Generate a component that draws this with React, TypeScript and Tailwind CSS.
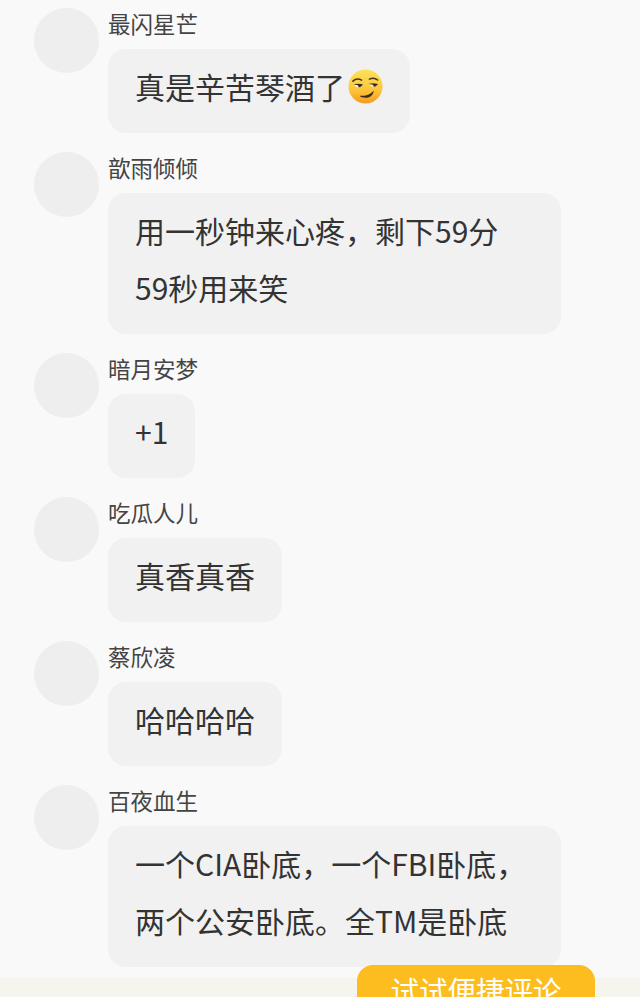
const comments = [
  { name: '最闪星芒', lines: ['真是辛苦琴酒了'], emoji: true },
  { name: '歆雨倾倾', lines: ['用一秒钟来心疼，剩下59分', '59秒用来笑'] },
  { name: '暗月安梦', lines: ['+1'] },
  { name: '吃瓜人儿', lines: ['真香真香'] },
  { name: '蔡欣凌', lines: ['哈哈哈哈'] },
  { name: '百夜血生', lines: ['一个CIA卧底，一个FBI卧底，', '两个公安卧底。全TM是卧底'] },
];

function SmirkEmoji() {
  return (
    <svg viewBox="0 0 36 36" className="ml-[2.500px] mt-[1px] h-[35px] w-[35px] shrink-0">
      <defs>
        <linearGradient id="face" x1="0" y1="0" x2="0" y2="1">
          <stop offset="0" stopColor="#fde25a" />
          <stop offset="0.6" stopColor="#fcc63a" />
          <stop offset="1" stopColor="#f59a1e" />
        </linearGradient>
      </defs>
      <circle cx="18" cy="18" r="17.5" fill="url(#face)" />
      <path d="M5 12.500c2.500-2.200 6-2.600 9-1" fill="none" stroke="#4a3320" strokeWidth="1.500" strokeLinecap="round" />
      <path d="M22 10.500c2.500-1.400 6-1.200 8.500.8" fill="none" stroke="#4a3320" strokeWidth="1.500" strokeLinecap="round" />
      <path d="M5.500 16c3-1 6.500-1 10 0-2 .3-2.500 2.800-5 2.800s-3.500-2-5-2.800z" fill="#fff6d8" />
      <path d="M21 15.500c3-1 6.500-1 10 0-1.500.8-2.500 2.800-5 2.800s-3-2.500-5-2.800z" fill="#fff6d8" />
      <path d="M5.500 16c3-1 6.500-1 10 0-1 .6-2 2.700-3.500 2.700s-1.800-2.100-1.800-2.100z" fill="#3b2a1c" />
      <path d="M21 15.500c3-1 6.500-1 10 0-1 .6-2 2.700-3.500 2.700s-1.800-2.100-1.800-2.100z" fill="#3b2a1c" />
      <path d="M12 27.500c5 .5 11-1 14.500-5.500-.5 4.500-3.500 7.500-8.500 7.500-2.500 0-5-.6-6-2z" fill="#3b2a1c" />
    </svg>
  );
}

function CommentRow({ name, lines, emoji }: { name: string; lines: string[]; emoji?: boolean }) {
  return (
    <div className="flex pb-[19px]">
      <div className="h-[65px] w-[65px] shrink-0 rounded-full bg-[#eeeeee]" />
      <div className="ml-[9px] flex flex-col items-start">
        <div className="h-[41px] text-[22.500px] leading-[30px] text-[#444444]">{name}</div>
        <div
          className={
            'rounded-[18px] bg-[#f1f1f1] px-[27px] pt-[9px] pb-[18.500px] text-[30px] leading-[56.600px] text-[#333333] ' +
            (lines.length > 1 ? 'w-[453px]' : '')
          }
        >
          {lines.map((line) => (
            <div key={line} className="flex items-center whitespace-nowrap">
              {line}
              {emoji && <SmirkEmoji />}
            </div>
          ))}
        </div>
      </div>
    </div>
  );
}

export default function App() {
  return (
    <div
      className="relative h-[997px] w-[640px] overflow-hidden bg-[#f9f9f9] pl-[34px] pt-[8px]"
      style={{ fontFamily: '"Noto Sans CJK SC", "Noto Sans", sans-serif' }}
    >
      {comments.map((c) => (
        <CommentRow key={c.name} name={c.name} lines={c.lines} emoji={c.emoji} />
      ))}
      <div className="absolute bottom-0 left-0 right-0 h-[19px] bg-[#f5f4ed]" />
      <div className="absolute left-[357px] top-[965px] h-[50px] w-[238px] rounded-[16px] bg-[#fdbd1f] text-center text-[28.500px] leading-[50px] text-white">
        试试便捷评论
      </div>
    </div>
  );
}
